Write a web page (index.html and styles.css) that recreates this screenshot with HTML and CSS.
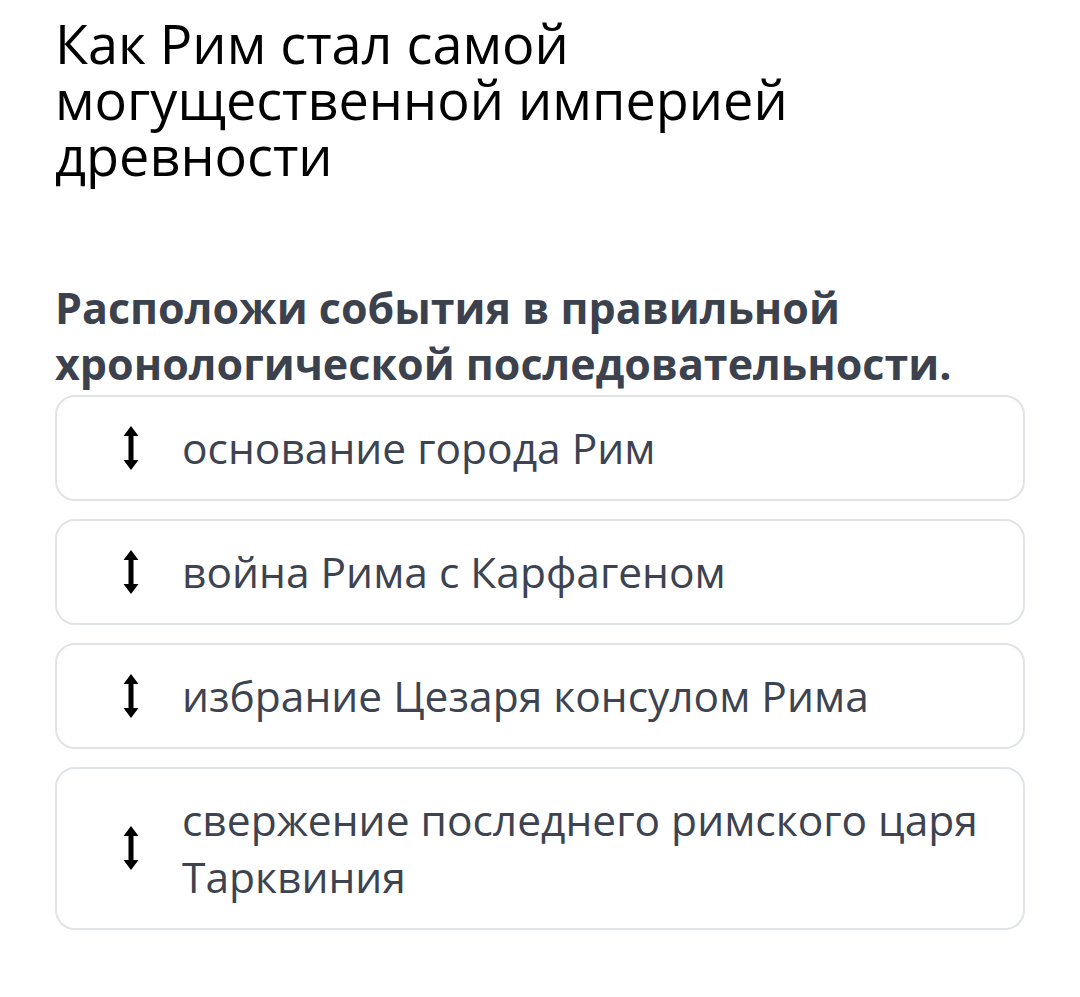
FILE: index.html
```html
<!DOCTYPE html>
<html lang="ru">
<head>
<meta charset="utf-8">
<link rel="stylesheet" href="styles.css">
</head>
<body>
<main class="page">
  <h1 class="title">Как Рим стал самой могущественной империей древности</h1>
  <p class="task">Расположи события в правильной хронологической последовательности.</p>
  <ul class="list">
    <li class="card">
      <span class="handle"><svg width="16" height="44" viewBox="0 0 16 44"><path d="M8 0 L15.5 10 L10.5 10 L10.5 34 L15.5 34 L8 44 L0.5 34 L5.5 34 L5.5 10 L0.5 10 Z" fill="#000"/></svg></span>
      <span class="text">основание города Рим</span>
    </li>
    <li class="card">
      <span class="handle"><svg width="16" height="44" viewBox="0 0 16 44"><path d="M8 0 L15.5 10 L10.5 10 L10.5 34 L15.5 34 L8 44 L0.5 34 L5.5 34 L5.5 10 L0.5 10 Z" fill="#000"/></svg></span>
      <span class="text">война Рима с Карфагеном</span>
    </li>
    <li class="card">
      <span class="handle"><svg width="16" height="44" viewBox="0 0 16 44"><path d="M8 0 L15.5 10 L10.5 10 L10.5 34 L15.5 34 L8 44 L0.5 34 L5.5 34 L5.5 10 L0.5 10 Z" fill="#000"/></svg></span>
      <span class="text">избрание Цезаря консулом Рима</span>
    </li>
    <li class="card">
      <span class="handle"><svg width="16" height="44" viewBox="0 0 16 44"><path d="M8 0 L15.5 10 L10.5 10 L10.5 34 L15.5 34 L8 44 L0.5 34 L5.5 34 L5.5 10 L0.5 10 Z" fill="#000"/></svg></span>
      <span class="text">свержение последнего римского царя Тарквиния</span>
    </li>
  </ul>
</main>
</body>
</html>
```

FILE: styles.css
```css
html, body {
  margin: 0;
  padding: 0;
  background: #ffffff;
}

.page {
  padding: 15px 55px 40px 55px;
  font-family: "Open Sans", "Noto Sans", sans-serif;
}

.title {
  margin: 0;
  font-weight: 400;
  font-size: 54px;
  line-height: 56px;
  color: #000000;
  max-width: 780px;
}

.task {
  margin: 97px 0 0 0;
  font-weight: 700;
  font-size: 43px;
  line-height: 56px;
  color: #3c424d;
}

.list {
  list-style: none;
  margin: 3px 0 0 0;
  padding: 0;
  display: flex;
  flex-direction: column;
  gap: 18px;
}

.card {
  display: flex;
  align-items: center;
  border: 2px solid #e1e4e6;
  border-radius: 20px;
  padding: 22px 30px 23px 66px;
  min-height: 57px;
}

.handle {
  flex: 0 0 auto;
  display: flex;
  width: 16px;
  margin-right: 43px;
}

.text {
  font-size: 42.5px;
  line-height: 57px;
  color: #3d4350;
}
```
